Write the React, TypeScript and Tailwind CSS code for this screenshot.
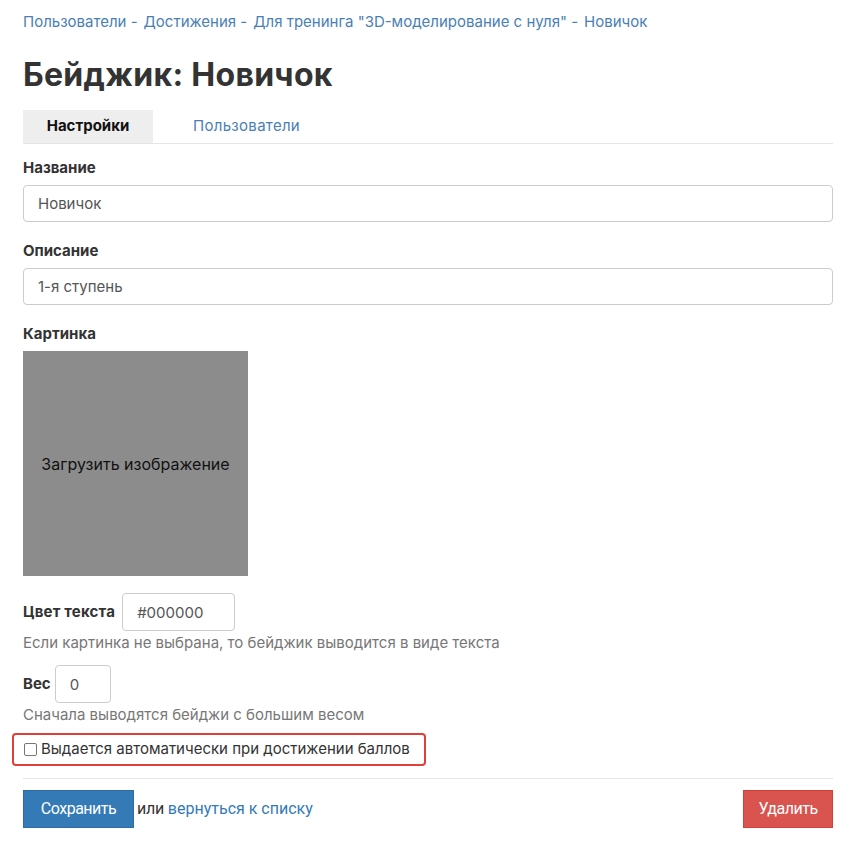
import React from 'react';

const font = { fontFamily: 'Inter, "Noto Sans", sans-serif' };

// Хлебные крошки
const crumbs = ['Пользователи', 'Достижения', 'Для тренинга "3D-моделирование с нуля"'];

export default function App() {
  return (
    <div className="bg-white text-[#333] pl-[23px] pr-[19px] pb-4 w-[852px] min-h-[842px]" style={font}>
      {/* breadcrumb */}
      <div className="pt-[12px] text-[15px] leading-[20px] text-[#4a7fb5] flex gap-[6px]">
        {crumbs.map((c) => (
          <span key={c}>
            <a className="text-[#4a7fb5]">{c}</a> -
          </span>
        ))}
        <span>Новичок</span>
      </div>

      <h1 className="mt-[23px] text-[32px] leading-[40px] font-bold text-[#333] tracking-[0.3px]">Бейджик: Новичок</h1>

      {/* tabs */}
      <div className="mt-[15px] flex border-b border-[#e5e5e5]">
        <div className="w-[130px] h-[33px] bg-[#eeeeee] flex items-center justify-center text-[15px] font-bold text-[#111]">
          Настройки
        </div>
        <div className="px-[40px] h-[33px] flex items-center text-[15px] text-[#4a7fb5] tracking-[0.3px]">
          Пользователи
        </div>
      </div>

      {/* name */}
      <div className="mt-[14px] text-[15px] font-bold leading-[20px]">Название</div>
      <input
        readOnly
        value="Новичок"
        className="mt-[7px] w-full h-[37px] border border-[#cccccc] rounded-[4px] px-[14px] text-[15px] text-[#555] outline-none"
      />

      {/* description */}
      <div className="mt-[19px] text-[15px] font-bold leading-[20px]">Описание</div>
      <input
        readOnly
        value="1-я ступень"
        className="mt-[7px] w-full h-[37px] border border-[#cccccc] rounded-[4px] px-[14px] text-[15px] text-[#555] outline-none"
      />

      {/* picture */}
      <div className="mt-[19px] text-[15px] font-bold leading-[20px]">Картинка</div>
      <div className="mt-[7px] w-[225px] h-[225px] bg-[#8c8c8c] flex items-center justify-center text-[16px] text-[#111]">
        Загрузить изображение
      </div>

      {/* text color */}
      <div className="mt-[17px] flex items-center gap-[7px]">
        <span className="text-[15px] font-bold tracking-[0.2px]">Цвет текста</span>
        <input
          readOnly
          value="#000000"
          className="w-[113px] h-[38px] border border-[#cccccc] rounded-[4px] px-[14px] text-[15px] text-[#555] outline-none"
        />
      </div>
      <div className="mt-[2px] text-[15px] leading-[20px] text-[#777]">
        Если картинка не выбрана, то бейджик выводится в виде текста
      </div>

      {/* weight */}
      <div className="mt-[12px] flex items-center gap-[4px]">
        <span className="text-[15px] font-bold">Вес</span>
        <input
          readOnly
          value="0"
          className="w-[56px] h-[38px] border border-[#cccccc] rounded-[4px] px-[14px] text-[15px] text-[#555] outline-none"
        />
      </div>
      <div className="mt-[2px] text-[15px] leading-[20px] text-[#777]">Сначала выводятся бейджи с большим весом</div>

      {/* auto checkbox */}
      <div className="mt-[8px] -ml-[11px] w-[414px] h-[33px] border-2 border-[#e0403a] rounded-[4px] flex items-center pl-[10px] gap-[4px]">
        <span className="w-[13px] h-[13px] border border-[#767676] rounded-[2px] bg-white" />
        <span className="text-[15px] text-[#333]">Выдается автоматически при достижении баллов</span>
      </div>

      <div className="mt-[12px] border-t border-[#e5e5e5]" />

      {/* actions */}
      <div className="mt-[11px] flex items-center" style={{ fontFamily: 'Roboto, sans-serif' }}>
        <button className="w-[111px] h-[38px] bg-[#337ab7] border border-[#2e6da4] text-white text-[16px] tracking-[-0.5px]">
          Сохранить
        </button>
        <span className="ml-[3px] text-[16px] tracking-[-0.3px] text-[#333]">или</span>
        <a className="ml-[4px] text-[16px] text-[#337ab7]">вернуться к списку</a>
        <button className="ml-auto w-[90px] h-[38px] bg-[#d9534f] border border-[#d43f3a] text-white text-[16px] tracking-[-0.5px]">
          Удалить
        </button>
      </div>
    </div>
  );
}
